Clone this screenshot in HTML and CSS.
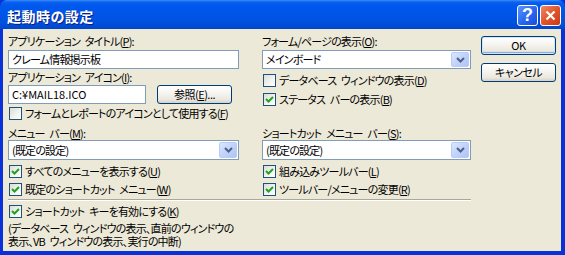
FILE: index.html
```html
<!DOCTYPE html>
<html lang="ja">
  <head>
    <meta charset="UTF-8" />
    <title>起動時の設定</title>
    <link rel="stylesheet" href="styles.css">
  </head>
  <body>
    <div class="window">
      <div class="titlebar">
        <span class="title">起動時の設定</span>
        <div class="caption-buttons">
          <span class="cap-btn help">?</span>
          <span class="cap-btn close">
            <svg width="11" height="11" viewBox="0 0 11 11">
              <path d="M1.5 1.5 L9.5 9.5 M9.5 1.5 L1.5 9.5" stroke="#fff" stroke-width="2.2" />
            </svg>
          </span>
        </div>
      </div>

      <div class="client">
        <div class="top">
          <!-- left column -->
          <div class="col col-left">
            <div class="label">アプリケーション タイトル(<u>P</u>):</div>
            <div class="textbox tb-title">クレーム情報掲示板</div>
            <div class="label label-icon">アプリケーション アイコン(<u>I</u>):</div>
            <div class="icon-row">
              <div class="textbox tb-icon">C:¥MAIL18.ICO</div>
              <button class="btn btn-browse">参照(<u>E</u>)...</button>
            </div>
            <label class="check check-form">
              <span class="box"></span>フォームとレポートのアイコンとして使用する(<u>F</u>)
            </label>
            <div class="label label-menu">メニュー バー(<u>M</u>):</div>
            <div class="combo">
              <span class="combo-text">(既定の設定)</span>
              <span class="combo-arrow"><svg width="9" height="6" viewBox="0 0 9 6"><path d="M1 1 L4.5 4.5 L8 1" /></svg></span>
            </div>
            <label class="check check-first">
              <span class="box checked"><svg width="11" height="11" viewBox="0 0 11 11"><path d="M2 5 L4.5 7.5 L9 3" /></svg></span>すべてのメニューを表示する(<u>U</u>)
            </label>
            <label class="check">
              <span class="box checked"><svg width="11" height="11" viewBox="0 0 11 11"><path d="M2 5 L4.5 7.5 L9 3" /></svg></span>既定のショートカット メニュー(<u>W</u>)
            </label>
          </div>

          <!-- right column -->
          <div class="col col-right">
            <div class="label">フォーム/ページの表示(<u>O</u>):</div>
            <div class="combo combo-form">
              <span class="combo-text">メインボード</span>
              <span class="combo-arrow"><svg width="9" height="6" viewBox="0 0 9 6"><path d="M1 1 L4.5 4.5 L8 1" /></svg></span>
            </div>
            <label class="check check-db">
              <span class="box"></span>データベース ウィンドウの表示(<u>D</u>)
            </label>
            <label class="check check-status">
              <span class="box checked"><svg width="11" height="11" viewBox="0 0 11 11"><path d="M2 5 L4.5 7.5 L9 3" /></svg></span>ステータス バーの表示(<u>B</u>)
            </label>
            <div class="label label-shortcut">ショートカット メニュー バー(<u>S</u>):</div>
            <div class="combo">
              <span class="combo-text">(既定の設定)</span>
              <span class="combo-arrow"><svg width="9" height="6" viewBox="0 0 9 6"><path d="M1 1 L4.5 4.5 L8 1" /></svg></span>
            </div>
            <label class="check check-first">
              <span class="box checked"><svg width="11" height="11" viewBox="0 0 11 11"><path d="M2 5 L4.5 7.5 L9 3" /></svg></span>組み込みツールバー(<u>L</u>)
            </label>
            <label class="check">
              <span class="box checked"><svg width="11" height="11" viewBox="0 0 11 11"><path d="M2 5 L4.5 7.5 L9 3" /></svg></span>ツールバー/メニューの変更(<u>R</u>)
            </label>
          </div>

          <!-- dialog buttons -->
          <div class="col col-buttons">
            <button class="btn btn-default">OK</button>
            <button class="btn">キャンセル</button>
          </div>
        </div>

        <div class="separator"></div>

        <div class="bottom">
          <label class="check">
            <span class="box checked"><svg width="11" height="11" viewBox="0 0 11 11"><path d="M2 5 L4.5 7.5 L9 3" /></svg></span>ショートカット キーを有効にする(<u>K</u>)
          </label>
          <div class="note">
            <div class="note-line">(データベース ウィンドウの表示、直前のウィンドウの</div>
            <div class="note-line">表示、VB ウィンドウの表示、実行の中断)</div>
          </div>
        </div>
      </div>
    </div>
  </body>
</html>
```

FILE: styles.css
```css
:root {
  --frame: #0831d9;
  --face: #ece9d8;
  --field-border: #7f9db9;
  --ui-font: "MS UI Gothic", "Noto Sans CJK JP", sans-serif;
}

body {
  margin: 0;
  width: 565px;
  height: 255px;
  overflow: hidden;
  font-family: var(--ui-font);
  font-size: 11px;
  letter-spacing: -0.8px;
  word-spacing: 3px;
  color: #000;
  font-feature-settings: "palt";
}

u {
  text-decoration: underline;
  text-underline-offset: 1px;
}

.window {
  width: 565px;
  height: 255px;
  box-sizing: border-box;
  display: flex;
  flex-direction: column;
  background: var(--frame);
}

/* title bar */
.titlebar {
  height: 29px;
  flex: none;
  display: flex;
  align-items: center;
  justify-content: space-between;
  padding: 0 4px 0 7px;
  border-radius: 7px 7px 0 0;
  background: linear-gradient(
    #3c8ef9 0,
    #0a62ef 2px,
    #0058ee 5px,
    #0055e8 50%,
    #0050dd 80%,
    #0046cc 100%
  );
}

.title {
  color: #fff;
  font-weight: bold;
  font-size: 14px;
  letter-spacing: 0.5px;
  text-shadow: 1px 1px 0 #0a1e80;
  padding-top: 2px;
}

.caption-buttons {
  display: flex;
  gap: 2px;
  padding-top: 1px;
}

.cap-btn {
  width: 19px;
  height: 19px;
  border: 1px solid #fff;
  border-radius: 3px;
  display: flex;
  align-items: center;
  justify-content: center;
}

.help {
  background: linear-gradient(135deg, #5a95fb 0%, #2a66ee 55%, #1b4fd8 100%);
  color: #fff;
  font-family: "Liberation Sans", sans-serif;
  font-weight: bold;
  font-size: 18px;
  letter-spacing: 0;
}

.close {
  background: linear-gradient(135deg, #ee8a6a 0%, #e2542a 50%, #c8391a 100%);
}

/* client area */
.client {
  flex: 1;
  margin: 0 4px 4px 3px;
  background: var(--face);
  padding: 6px 0 0 5px;
}

.top {
  display: flex;
  height: 161px;
}

.col {
  display: flex;
  flex-direction: column;
}

.col-left {
  width: 231px;
}

.col-right {
  width: 209px;
  margin-left: 23px;
}

.col-buttons {
  margin-left: 10px;
  padding-top: 1px;
  gap: 8px;
}

.label {
  height: 13px;
  line-height: 13px;
  white-space: nowrap;
}

.label-icon {
  margin-top: 2px;
}

.label-menu {
  margin-top: 7px;
}

.label-shortcut {
  margin-top: 21px;
}

/* text fields */
.textbox {
  height: 19px;
  box-sizing: border-box;
  border: 1px solid var(--field-border);
  background: #fff;
  padding-left: 3px;
  line-height: 17px;
  white-space: nowrap;
}

.tb-title {
  margin-top: 2px;
}

.icon-row {
  display: flex;
  align-items: center;
  margin-top: 1px;
}

.tb-icon {
  width: 138px;
  letter-spacing: 0;
}

.btn-browse {
  margin-left: 11px;
  width: 82px;
  height: 18px;
}

/* buttons */
.btn {
  width: 75px;
  height: 19px;
  box-sizing: border-box;
  border: 1px solid #003c74;
  border-radius: 3px;
  padding: 0;
  font-family: var(--ui-font);
  font-size: 11px;
  letter-spacing: -0.5px;
  font-feature-settings: "palt";
  color: #000;
  line-height: 15px;
  background: linear-gradient(#ffffff 0%, #f6f5f1 40%, #ebe8df 80%, #d6d0c5 100%);
}

.btn-default {
  box-shadow: inset 0 0 0 1px #cee7ff, inset 0 -1px 0 1px #89ade4;
}

/* combo boxes */
.combo {
  height: 20px;
  box-sizing: border-box;
  border: 1px solid var(--field-border);
  background: #fff;
  display: flex;
  align-items: center;
  padding: 1px;
}

.combo-form {
  height: 19px;
  margin-top: 2px;
}

.combo-text {
  flex: 1;
  padding-left: 2px;
  line-height: 15px;
  white-space: nowrap;
}

.combo-arrow {
  width: 16px;
  align-self: stretch;
  border: 1px solid #bacbf5;
  border-radius: 2px;
  background: linear-gradient(135deg, #dce7fe 0%, #c1d3fb 50%, #aec5f7 100%);
  display: flex;
  align-items: center;
  justify-content: center;
}

.combo-arrow path {
  fill: none;
  stroke: #4d6185;
  stroke-width: 2;
}

/* check boxes */
.check {
  display: flex;
  align-items: center;
  height: 13px;
  line-height: 13px;
  white-space: nowrap;
  margin-top: 5px;
}

.check-form {
  margin-top: 3px;
}

.check-db {
  margin-top: 5px;
}

.check-status {
  margin-top: 6px;
}

.box {
  width: 13px;
  height: 13px;
  box-sizing: border-box;
  border: 1px solid #1c5180;
  background: linear-gradient(135deg, #dcdcd7 0%, #f4f4f0 60%, #ffffff 100%);
  margin-right: 3px;
  margin-left: 1px;
  flex: none;
  display: flex;
  align-items: center;
  justify-content: center;
}

.box path {
  fill: none;
  stroke: #21a121;
  stroke-width: 2;
}

/* separator + bottom */
.separator {
  width: 463px;
  margin-top: 3px;
  border-top: 1px solid #aca899;
  border-bottom: 1px solid #fff;
}

.bottom .check {
  margin-top: 4px;
}

.note {
  margin-top: 4px;
}

.note-line {
  height: 13px;
  line-height: 13px;
  white-space: nowrap;
}
```
